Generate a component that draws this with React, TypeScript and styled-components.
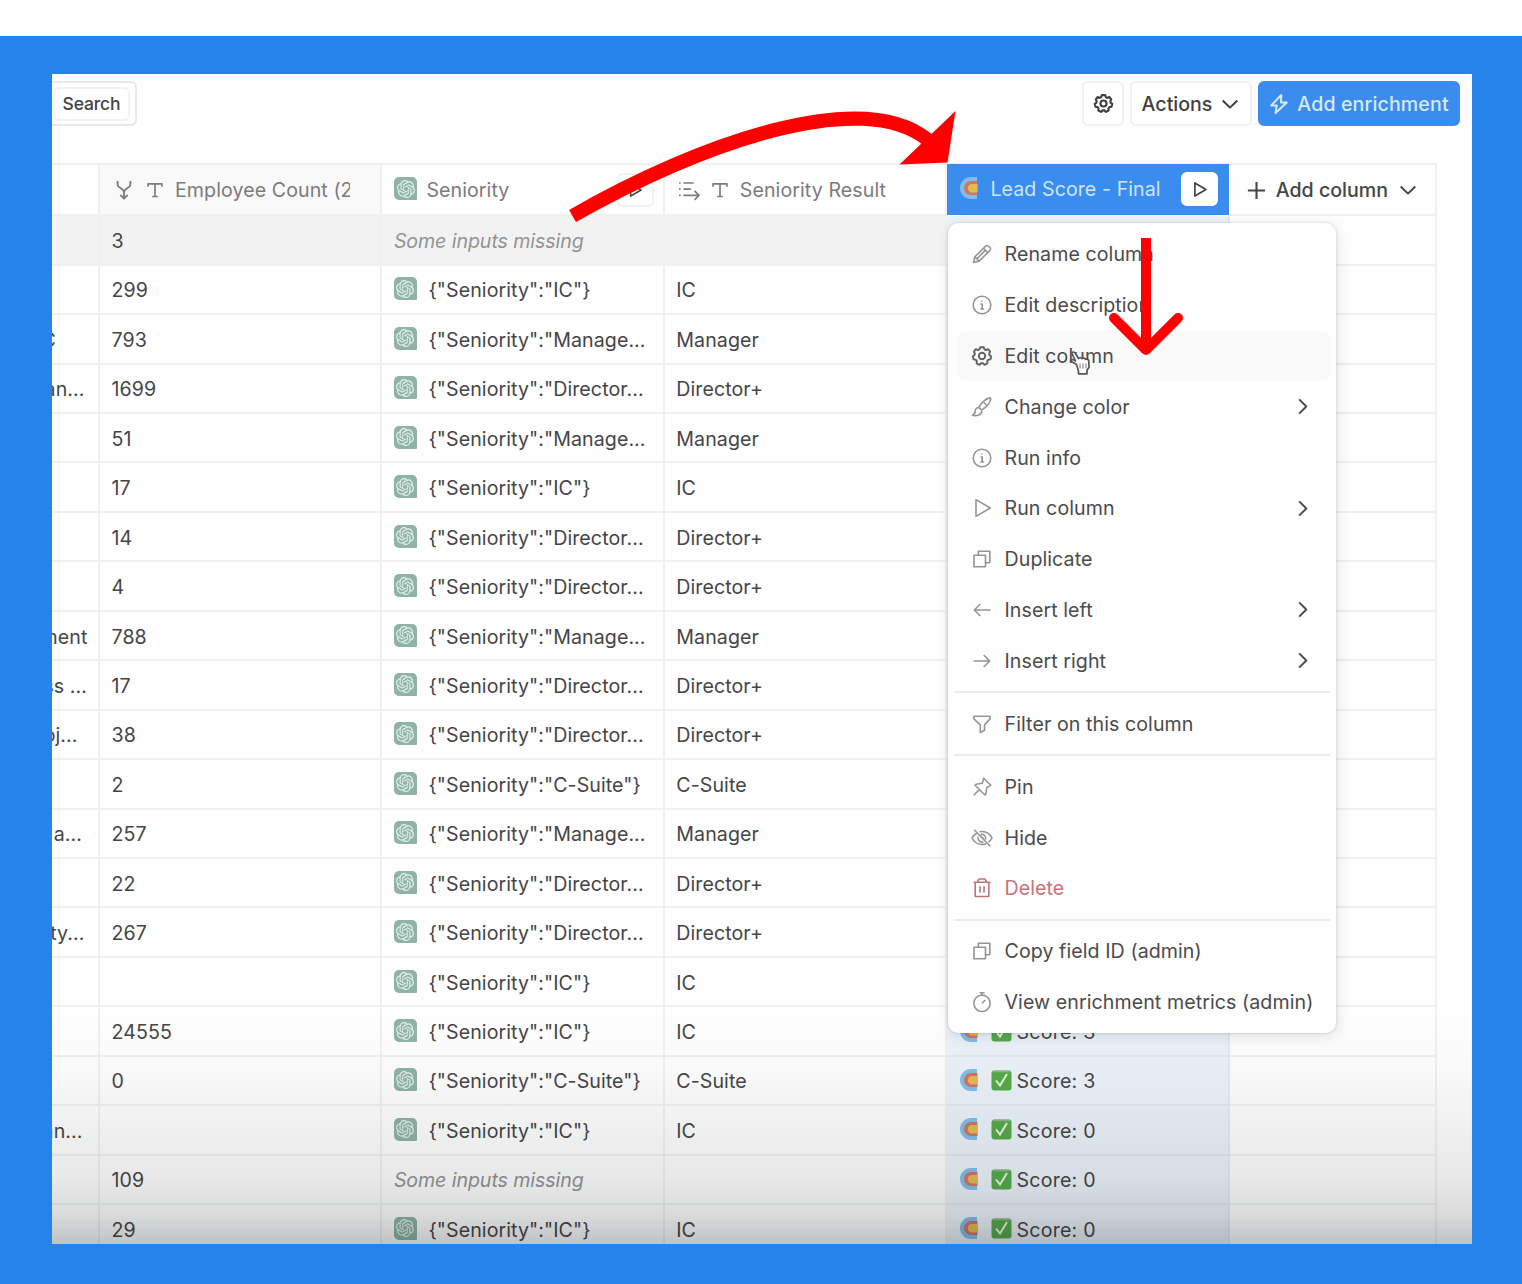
import React from 'react';
import styled, { createGlobalStyle, css } from 'styled-components';
import { SiOpenai } from 'react-icons/si';

const Global = createGlobalStyle`
  * { box-sizing: border-box; }
  body { margin: 0; background: #fff; font-family: Inter, "Liberation Sans", sans-serif; }
`;

const Page = styled.div`
  width: 1522px;
  height: 1284px;
  padding-top: 36px;
  background: #fff;
  overflow: hidden;
`;
const Frame = styled.div`
  height: 1248px;
  padding: 38px 50px 40px 52px;
  background: #2783ec;
`;
const Panel = styled.main`
  position: relative;
  height: 1170px;
  background: #fefefe;
  overflow: hidden;
  color: #454545;
  font-size: 19.6px;
  font-weight: 430;
  letter-spacing: 0.08px;
`;
const Toolbar = styled.header`
  display: flex;
  align-items: center;
  height: 89px;
  padding: 7px 12px 37px 0;
  gap: 6px;
`;
const SearchBox = styled.div`
  display: flex;
  align-items: center;
  width: 85px;
  height: 45px;
  margin-right: auto;
  padding-left: 1px;
  border: 2px solid #e9e9e9;
  border-left: 0;
  border-radius: 0 6px 6px 0;
`;
const SearchButton = styled.button`
  width: 77px;
  height: 34px;
  padding: 0;
  border: 2px solid #f2f2f2;
  border-radius: 6px;
  background: #fff;
  color: #444;
  font: 500 17.5px Inter, sans-serif;
  letter-spacing: -0.15px;
`;
const ToolButton = styled.button<{ $w: number; $primary?: boolean }>`
  display: flex;
  align-items: center;
  justify-content: center;
  gap: 8px;
  width: ${p => p.$w}px;
  height: 45px;
  padding: 0;
  border: 2px solid ${p => (p.$primary ? '#3a8cee' : '#f1f1f1')};
  border-radius: 6px;
  background: ${p => (p.$primary ? '#3a8cee' : '#fff')};
  color: ${p => (p.$primary ? '#d5eafc' : '#3f3f3f')};
  font: 500 19.6px Inter, sans-serif;
  letter-spacing: ${p => (p.$primary ? 0.12 : 0)}px;
`;
const columns = css`
  display: grid;
  grid-template-columns: 48px 282.4px 282.4px 282.6px 282.4px 207.2px;
  width: 1385px;
`;
const HeadRow = styled.div`
  ${columns}
  height: 53.3px;
  border-top: 2px solid #f0f0f0;
`;
const HeadCell = styled.div<{ $bg?: string; $active?: boolean }>`
  display: flex;
  align-items: center;
  min-width: 0;
  padding: 1px 0 0 12px;
  border-right: 2px solid ${p => (p.$active ? '#3a8cee' : '#f0f0f0')};
  border-bottom: 2px solid ${p => (p.$active ? '#3a8cee' : '#f0f0f0')};
  background: ${p => (p.$active ? '#3a8cee' : p.$bg || 'transparent')};
  color: ${p => (p.$active ? '#cfe5fb' : '#7b7b7d')};
  white-space: nowrap;
  ${p => p.$active && 'margin: -1px 0.6px 1px 0;'}
`;
const HeadLabel = styled.span<{ $ml: number; $w?: number; $strong?: boolean }>`
  margin-left: ${p => p.$ml}px;
  overflow: hidden;
  ${p => p.$w && `width: ${p.$w}px;`}
  ${p => p.$strong && 'font-weight: 500; color: #454545; letter-spacing: 0;'}
`;
const HeadIcon = styled.span<{ $ml: number; $strong?: boolean }>`
  display: flex;
  margin-left: ${p => p.$ml}px;
  ${p => p.$strong && 'color: #454545;'}
`;
const PlayButton = styled.button<{ $solid?: boolean }>`
  display: flex;
  align-items: center;
  justify-content: center;
  width: 37px;
  height: 34px;
  margin: 0 9px 0 auto;
  padding: 0;
  border: 2px solid ${p => (p.$solid ? '#fff' : '#f1f1f1')};
  border-radius: 6px;
  background: #fff;
  color: #444;
`;
const Row = styled.div<{ $hl?: boolean }>`
  ${columns}
  height: 49.44px;
  background: ${p => (p.$hl ? '#f2f2f2' : 'transparent')};
`;
const Cell = styled.div<{ $muted?: boolean; $tint?: boolean; $plain?: boolean }>`
  display: flex;
  align-items: center;
  min-width: 0;
  padding: 2px 0 0 ${p => (p.$tint ? 12 : 11.5)}px;
  border-right: 2px solid ${p => (p.$tint ? '#e2eaf3' : '#f0f0f0')};
  border-bottom: 2px solid ${p => (p.$tint ? '#e1e8f0' : '#f0f0f0')};
  background: ${p => (p.$tint ? '#ecf2fa' : p.$plain ? '#fefefe' : 'transparent')};
  white-space: nowrap;
  ${p => p.$muted && 'color: #929294; font-style: italic; letter-spacing: -0.08px;'}
`;
const ClippedCell = styled(Cell)<{ $pr: number }>`
  justify-content: flex-end;
  padding: 2px ${p => p.$pr}px 0 0;
  overflow: hidden;
`;
const GptTile = styled.span`
  display: inline-flex;
  align-items: center;
  justify-content: center;
  flex: none;
  width: 23px;
  height: 23px;
  margin: -3px 11.5px 0 0;
  border-radius: 5px 5px 1px 5px;
  background: #8fb3a6;
  color: #e4f0eb;
`;
const ScoreText = styled.span`
  margin-left: 4px;
  letter-spacing: 0.25px;
`;
const Shade = styled.div`
  position: absolute;
  inset: auto 0 0 0;
  height: 234px;
  pointer-events: none;
  background: linear-gradient(to bottom, rgba(10,15,20,0) 0%, rgba(10,15,20,0.014) 22%, rgba(10,15,20,0.06) 50%, rgba(10,15,20,0.092) 72%, rgba(10,15,20,0.145) 87%, rgba(10,15,20,0.25) 100%);
`;
const Menu = styled.nav`
  position: absolute;
  left: 896px;
  top: 149px;
  width: 388px;
  height: 810px;
  padding: 6px 6px;
  border-radius: 10px;
  background: #fefefe;
  box-shadow: 0 0 3px rgba(40, 50, 60, 0.2), 2px 4px 14px rgba(40, 50, 60, 0.12);
`;
const MenuItem = styled.div<{ $hover?: boolean; $danger?: boolean }>`
  display: flex;
  align-items: center;
  gap: 12px;
  height: 50.8px;
  margin: 0 0 0 4px;
  padding: 0 17px 0 13px;
  border-radius: 8px;
  background: ${p => (p.$hover ? '#f9f9f9' : 'transparent')};
  color: ${p => (p.$danger ? '#c9727c' : '#4b4b4b')};
  white-space: nowrap;
`;
const ItemIcon = styled.span<{ $dark?: boolean; $danger?: boolean }>`
  display: flex;
  width: 22px;
  margin-left: -0.5px;
  color: ${p => (p.$danger ? '#b9777d' : p.$dark ? '#626262' : '#959595')};
`;
const ItemLabel = styled.span`
  flex: 1;
`;
const Divider = styled.hr`
  height: 2px;
  margin: 5px 0 5.2px;
  border: 0;
  background: #ececec;
`;
const Annotations = styled.svg`
  position: absolute;
  left: 0;
  top: 0;
  pointer-events: none;
`;

const paths: Record<string, React.ReactNode> = {
  pencil: <><path d="M2.5 19.5l1.3-5.6L14.7 3a1.8 1.8 0 0 1 2.6 0l1.7 1.7a1.8 1.8 0 0 1 0 2.6L8.1 18.2z" /><path d="M12.4 5.3l4.3 4.3M14 7.6L6 15.7M3.8 13.9l4.3 4.3" /></>,
  info: <><circle cx="11" cy="11" r="8.8" /><path d="M9.5 10h1.7v5M9.3 15h3.8M11 6.6v.8" /></>,
  gear: <><path d="M9.2 2.2h3.6l.7 2.2 1.5.7 2.1-.9 2 2.5-1 2 .5 1.6 1.6 1-.8 3.1-2.2.4-1 1.3.2 2.3-2.8 1.4-1.7-1.6h-1.8l-1.7 1.6-2.8-1.4.2-2.3-1-1.3-2.2-.4-.8-3.1 1.6-1 .5-1.6-1-2 2-2.5 2.1.9 1.5-.7z" /><circle cx="11" cy="11" r="3.2" /></>,
  brush: <><path d="M8 11.5C10 7 15 2.4 18.8 1.9c.7 0 1 .3.9 1C19 7 15 11.5 10.6 14" /><path d="M8 11.5a4 4 0 0 0-3.8 3.800c0 2-1 3.200-2.800 4 4 .8 9.400-.2 9.400-4.600M8 11.500l2.700 2.700M12.800 6.500l2.800 2.800" /></>,
  play: <path d="M5 2.600v16.800L19.300 11z" />,
  copy: <><path d="M3 7.300h11.500v11.500H3z" /><path d="M7.300 7.300V3.200h11.500v11.500h-4.300" /></>,
  left: <path d="M19.500 11h-16M9.300 5l-6 6 6 6" />,
  right: <path d="M2.500 11h16M12.700 5l6 6-6 6" />,
  filter: <path d="M2.900 3.300h16.200v2.600l-5.600 6v5.300l-4.200 2.300v-7.600l-6.400-6z" />,
  pin: <path d="M12.700 2.200l7.100 7.100-1.800 1.100-2.100 1.100-1 6.300-1 1.200-9.800-9.800 1.200-1 6-1zM8.200 13.800L2.700 19.300" />,
  hide: <><path d="M5.600 6.200C3.400 7.500 1.900 9.300 1 11c2 4 5.700 6.500 10 6.500 1.500 0 2.900-.3 4.200-.8M8.600 4.800A11 11 0 0 1 11 4.500c4.300 0 8 2.500 10 6.500-.7 1.500-1.900 2.900-3.400 4M14.600 12.500a4 4 0 0 0-5-5M7.200 9.700a4 4 0 0 0 5.200 5.100" /><path d="M3.200 2.800l16 16.500M9.500 8.800l4 4" /></>,
  trash: <><path d="M2.500 5.200h17M4.200 5.200v14.300h13.600V5.200M7 5V3.600L8.400 2h5.200L15 3.600V5M9 9.200v6.300M13 9.200v6.300" /></>,
  timer: <><circle cx="11" cy="12.300" r="8.200" /><path d="M8.500 1.700h5M11 1.700v2.400M11 12.300l3.300-3.300" /></>,
  chevronDown: <path d="M3 7.200l8 7.800 8-7.800" />,
  chevronRight: <path d="M7.500 3.500l7.500 7.500-7.500 7.500" />,
  plus: <path d="M11 2v18M2 11h18" />,
  bolt: <path d="M13.500 1L2.500 12.700h6L7.200 21 19.500 9.300h-6.300z" />,
  text: <path d="M2.500 7V3.500h17V7M11 3.500v15.500M7.500 19h7" />,
  merge: <path d="M4 1v4.500c0 3 7 4 7 8V20M18 1v4.500c0 3-7 4-7 8M7 16.500l4 4 4-4" />,
  list: <path d="M5.500 2.500H18M5.500 10H14.500M5.500 17.500H24M19 12l5.500 5.500L19 23M0 2.500h2M0 10h2M0 17.500h2" />,
};

const Icon = ({ name, size = 22, sw = 1.5 }: { name: string; size?: number; sw?: number }) => (
  <svg width={size} height={size} viewBox="0 0 22 22" fill="none" stroke="currentColor" strokeWidth={sw} strokeLinejoin="round" overflow="visible" style={{ flex: 'none' }}>
    {paths[name]}
  </svg>
);

const ClaySvg = styled.svg`
  flex: none;
  margin-top: -3px;
`;
const ClayIcon = () => (
  <ClaySvg width="19" height="24" viewBox="0 0 19 24">
    <path d="M18 1H12A11 11 0 0 0 12 23H18V18H14V6H18z" fill="#82bde9" />
    <path d="M18.500 5H12a7 7 0 0 0 0 14H18.500z" fill="#cf7468" />
    <path d="M18.500 8H13a4.200 4.200 0 0 0 0 8.400H18.500z" fill="#e6b951" />
  </ClaySvg>
);

const CheckSvg = styled.svg`
  flex: none;
  margin: -2px 0 0 13px;
`;
const CheckTile = () => (
  <CheckSvg width="21" height="21" viewBox="0 0 21 21">
    <rect x="0.500" y="0.500" width="20" height="20" rx="3" fill="#56aa49" />
    <path d="M2 1.500h17" stroke="#8db78a" strokeWidth="1.600" />
    <path d="M5 10.500l4 5 7-11.500" fill="none" stroke="#e7f5e4" strokeWidth="2" />
  </CheckSvg>
);

const Gpt = () => <GptTile><SiOpenai size={18} /></GptTile>;

type RowData = [string, number, string, string, string];
const M = '{"Seniority":"Manage...';
const D = '{"Seniority":"Director...';
const I = '{"Seniority":"IC"}';
const C = '{"Seniority":"C-Suite"}';
const rows: RowData[] = [
  ['', 0, '3', '', ''],
  ['', 0, '299', I, 'IC'],
  ['C', 42, '793', M, 'Manager'],
  ['an...', 13.5, '1699', D, 'Director+'],
  ['', 0, '51', M, 'Manager'],
  ['', 0, '17', I, 'IC'],
  ['', 0, '14', D, 'Director+'],
  ['', 0, '4', D, 'Director+'],
  ['ment', 10.5, '788', M, 'Manager'],
  ['ss ...', 11, '17', D, 'Director+'],
  ['oj...', 20.5, '38', D, 'Director+'],
  ['', 0, '2', C, 'C-Suite'],
  ['a...', 16, '257', M, 'Manager'],
  ['', 0, '22', D, 'Director+'],
  ['ty...', 13.5, '267', D, 'Director+'],
  ['', 0, '', I, 'IC'],
  ['', 0, '24555', I, 'IC'],
  ['', 0, '0', C, 'C-Suite'],
  ['an...', 15.5, '', I, 'IC'],
  ['', 0, '109', '', ''],
  ['', 0, '29', I, 'IC'],
];
const scores: Record<number, string> = { 16: '3', 17: '3', 18: '0', 19: '0', 20: '0' };

type Item = { icon: string; label: string; sub?: boolean; hover?: boolean; danger?: boolean };
const groups: Item[][] = [
  [
    { icon: 'pencil', label: 'Rename column' },
    { icon: 'info', label: 'Edit description' },
    { icon: 'gear', label: 'Edit column', hover: true },
    { icon: 'brush', label: 'Change color', sub: true },
    { icon: 'info', label: 'Run info' },
    { icon: 'play', label: 'Run column', sub: true },
    { icon: 'copy', label: 'Duplicate' },
    { icon: 'left', label: 'Insert left', sub: true },
    { icon: 'right', label: 'Insert right', sub: true },
  ],
  [{ icon: 'filter', label: 'Filter on this column' }],
  [
    { icon: 'pin', label: 'Pin' },
    { icon: 'hide', label: 'Hide' },
    { icon: 'trash', label: 'Delete', danger: true },
  ],
  [
    { icon: 'copy', label: 'Copy field ID (admin)' },
    { icon: 'timer', label: 'View enrichment metrics (admin)' },
  ],
];

const TableRow = ({ data, index }: { data: RowData; index: number }) => {
  const [left, pr, count, seniority, result] = data;
  return (
    <Row $hl={index === 0}>
      <ClippedCell $pr={pr}>{left}</ClippedCell>
      <Cell>{count}</Cell>
      {seniority ? <Cell><Gpt />{seniority}</Cell> : <Cell $muted>Some inputs missing</Cell>}
      <Cell>{result}</Cell>
      <Cell $tint>
        {scores[index] && <><ClayIcon /><CheckTile /><ScoreText>Score: {scores[index]}</ScoreText></>}
      </Cell>
      <Cell $plain />
    </Row>
  );
};

export default function App() {
  return (
    <Page>
      <Global />
      <Frame>
        <Panel>
          <Toolbar>
            <SearchBox><SearchButton>Search</SearchButton></SearchBox>
            <ToolButton $w={42}><Icon name="gear" size={21} sw={2.200} /></ToolButton>
            <ToolButton $w={122}>Actions<Icon name="chevronDown" size={20} sw={2.200} /></ToolButton>
            <ToolButton $w={202} $primary><Icon name="bolt" size={20} sw={2.200} />Add enrichment</ToolButton>
          </Toolbar>
          <HeadRow>
            <HeadCell />
            <HeadCell $bg="#f9f9f9">
              <HeadIcon $ml={2}><Icon name="merge" size={20} sw={2} /></HeadIcon>
              <HeadIcon $ml={12}><Icon name="text" size={18} sw={2} /></HeadIcon>
              <HeadLabel $ml={11} $w={175}>Employee Count (2</HeadLabel>
            </HeadCell>
            <HeadCell>
              <Gpt /><HeadLabel $ml={-2.500}>Seniority</HeadLabel>
              <PlayButton><Icon name="play" size={16} sw={2.200} /></PlayButton>
            </HeadCell>
            <HeadCell>
              <HeadIcon $ml={2.500}><Icon name="list" size={18} sw={2} /></HeadIcon>
              <HeadIcon $ml={14}><Icon name="text" size={18} sw={2} /></HeadIcon>
              <HeadLabel $ml={10.500}>Seniority Result</HeadLabel>
            </HeadCell>
            <HeadCell $active>
              <ClayIcon /><HeadLabel $ml={12}>Lead Score - Final</HeadLabel>
              <PlayButton $solid><Icon name="play" size={17} sw={2.200} /></PlayButton>
            </HeadCell>
            <HeadCell>
              <HeadIcon $ml={4} $strong><Icon name="plus" size={21} sw={2.200} /></HeadIcon>
              <HeadLabel $ml={9} $strong>Add column</HeadLabel>
              <HeadIcon $ml={10} $strong><Icon name="chevronDown" size={20} sw={2.200} /></HeadIcon>
            </HeadCell>
          </HeadRow>
          {rows.map((r, i) => <TableRow key={i} data={r} index={i} />)}
          <Shade />
          <Menu>
            {groups.map((items, g) => (
              <React.Fragment key={g}>
                {g > 0 && <Divider />}
                {items.map(it => (
                  <MenuItem key={it.label} $hover={it.hover} $danger={it.danger}>
                    <ItemIcon $dark={it.hover} $danger={it.danger}><Icon name={it.icon} sw={it.hover ? 1.900 : 1.600} /></ItemIcon>
                    <ItemLabel>{it.label}</ItemLabel>
                    {it.sub && <Icon name="chevronRight" size={21} sw={2} />}
                  </MenuItem>
                ))}
              </React.Fragment>
            ))}
          </Menu>
          <Annotations width="1420" height="1170" viewBox="52 74 1420 1170">
            <path d="M1076.500 364.500l-6-3.500c1-2 3-1.500 5 0l-3.500-7.500c0-2 2.500-2 3.500 0l3 5c1-1 2.500-1 3.500.2 1-1 3-.8 3.600.6 1.800-.6 3.200.2 3.200 2l.2 6-2 3v3.500h-8.500v-2.500z" fill="#fff" stroke="#555" strokeWidth="1.700" strokeLinejoin="round" />
            <path d="M1080 363.500v5M1083 363.500v5M1086 363.500v5" stroke="#777" strokeWidth="1" />
            <path d="M572.500 216C700 143 862 86 928 140" fill="none" stroke="#fe0000" strokeWidth="14" />
            <path d="M955.500 111L947.500 162.500L899.500 164.500z" fill="#fe0000" />
            <path d="M1146 238V348" stroke="#fe0000" strokeWidth="10" />
            <path d="M1114 318L1146 350L1178 318" fill="none" stroke="#fe0000" strokeWidth="10" strokeLinecap="round" strokeLinejoin="round" />
          </Annotations>
        </Panel>
      </Frame>
    </Page>
  );
}
